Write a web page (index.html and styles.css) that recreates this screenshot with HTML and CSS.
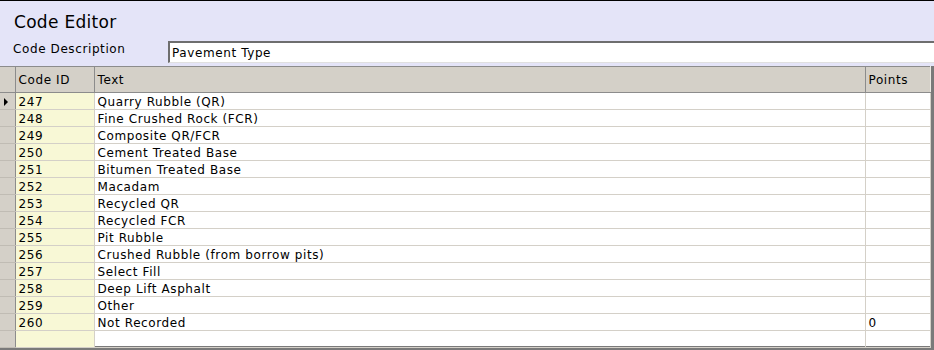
FILE: index.html
```html
<!DOCTYPE html>
<html lang="en">
<head>
    <meta charset="UTF-8">
    <title>Code Editor</title>
    <link rel="stylesheet" href="styles.css">
</head>
<body>

    <div class="editor">
        <div class="top">
            <h2>Code Editor</h2>
            <div class="desc-row">
                <label for="desc">Code Description</label>
                <input type="text" id="desc" value="Pavement Type">
            </div>
        </div>

        <div class="grid">
            <table>
                <colgroup>
                    <col class="c-sel">
                    <col class="c-id">
                    <col class="c-text">
                    <col class="c-points">
                </colgroup>
                <thead>
                    <tr>
                        <th class="sel"></th>
                        <th>Code ID</th>
                        <th>Text</th>
                        <th>Points</th>
                    </tr>
                </thead>
                <tbody id="rows"></tbody>
            </table>
        </div>
    </div>

    <script>
        const codes = [
            [247, 'Quarry Rubble (QR)', ''],
            [248, 'Fine Crushed Rock (FCR)', ''],
            [249, 'Composite QR/FCR', ''],
            [250, 'Cement Treated Base', ''],
            [251, 'Bitumen Treated Base', ''],
            [252, 'Macadam', ''],
            [253, 'Recycled QR', ''],
            [254, 'Recycled FCR', ''],
            [255, 'Pit Rubble', ''],
            [256, 'Crushed Rubble (from borrow pits)', ''],
            [257, 'Select Fill', ''],
            [258, 'Deep Lift Asphalt', ''],
            [259, 'Other', ''],
            [260, 'Not Recorded', '0'],
            ['', '', '']
        ];

        const body = document.getElementById('rows');
        codes.forEach(function (c, i) {
            const tr = document.createElement('tr');
            const marker = i === 0 ? '<span class="arrow"></span>' : '';
            tr.innerHTML = '<td class="sel">' + marker + '</td>' +
                '<td class="id">' + c[0] + '</td>' +
                '<td>' + c[1] + '</td>' +
                '<td>' + c[2] + '</td>';
            body.appendChild(tr);
        });
    </script>

</body>
</html>
```

FILE: styles.css
```css
* {
    margin: 0;
    padding: 0;
    box-sizing: border-box;
}

body {
    font-family: "DejaVu Sans", Verdana, sans-serif;
    font-size: 12px;
    letter-spacing: 0.6px;
    color: #000000;
    background: #ffffff;
    width: 934px;
    height: 350px;
    overflow: hidden;
}

.top {
    background: #e4e4f8;
    border-top: 1px solid #000000;
    height: 66px;
    padding: 11px 0 0 13px;
}

h2 {
    font-size: 17px;
    font-weight: normal;
    letter-spacing: 0.3px;
    margin-left: 1px;
    line-height: 20px;
}

.desc-row {
    display: flex;
    align-items: flex-start;
    margin-top: 9px;
}

.desc-row label {
    width: 155px;
    line-height: 16px;
}

.desc-row input {
    flex: 1;
    height: 22px;
    margin-right: -20px;
    border: 1px solid #e0e0e0;
    border-top: 2px solid #6e6e6e;
    border-left: 2px solid #6e6e6e;
    background: #ffffff;
    font-family: inherit;
    font-size: 12px;
    letter-spacing: 0.6px;
    padding: 0 2px;
    outline: none;
}

.grid {
    border-right: 4px solid #7a7a7a;
    border-bottom: 4px solid #7a7a7a;
    height: 284px;
    background: #ffffff;
}

table {
    border-collapse: collapse;
    table-layout: fixed;
    width: 930px;
}

.c-sel { width: 15px; }
.c-id { width: 79px; }
.c-text { width: 771px; }
.c-points { width: 65px; }

th {
    background: #d4d0c8;
    font-weight: normal;
    text-align: left;
    height: 26px;
    padding: 0 3px;
    border-top: 1px solid #8c8c8c;
    border-right: 1px solid #8c8c8c;
    border-bottom: 1px solid #8c8c8c;
}

th:last-child {
    border-right: 1px solid #ece9e2;
}

td {
    height: 17px;
    padding: 2px 3px 0;
    border-right: 1px solid #d4d0c8;
    border-bottom: 1px solid #d4d0c8;
    white-space: nowrap;
    line-height: 14px;
}

td.sel {
    background: #d4d0c8;
    border-right: 1px solid #8c8c8c;
    border-bottom: 1px solid #c0bcb4;
    padding: 0;
    position: relative;
}

td.id {
    background: #f8f8d6;
}

.arrow {
    position: absolute;
    left: 4px;
    top: 5px;
    border-top: 4px solid transparent;
    border-bottom: 4px solid transparent;
    border-left: 4px solid #000000;
}
```
